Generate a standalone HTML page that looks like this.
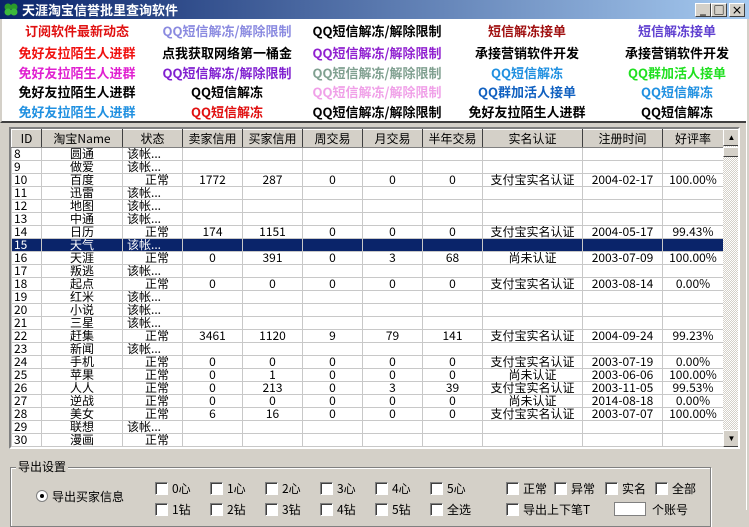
<!DOCTYPE html>
<html><head><meta charset="utf-8">
<style>
*{margin:0;padding:0;box-sizing:border-box}
body{width:749px;height:510px;overflow:hidden;background:#d4d0c8;font-family:"Liberation Sans","Noto Sans CJK SC",sans-serif;position:relative}
.title{position:absolute;left:0;top:0;width:749px;height:19px;background:linear-gradient(90deg,#0a246a,#a6caf0);color:#fff;font-weight:bold;font-size:13px;line-height:19px;padding-left:22px;font-family:"Noto Sans CJK SC",sans-serif}
.clover{position:absolute;left:3px;top:2px;width:16px;height:15px}
.btns{position:absolute;right:4px;top:3px;display:flex;gap:0}
.btns div{width:16px;height:14px;background:#d4d0c8;border:1px solid;border-color:#fff #404040 #404040 #fff;font-size:11px;line-height:12px;text-align:center;color:#000;font-weight:bold}
.links{position:absolute;left:0;top:19px;width:749px;height:104px;background:#fff;border-left:2px solid #d4d0c8;border-right:2px solid #d4d0c8;border-bottom:2px solid #404040}
.lk{position:absolute;width:150px;text-align:center;font-size:13px;font-weight:bold;font-family:"Noto Sans CJK SC",sans-serif;line-height:16px;white-space:nowrap}
.grid{position:absolute;left:9px;top:127px;width:731px;height:322px;border:2px solid;border-color:#808080 #fff #fff #808080;background:#fff;overflow:hidden}
table{border-collapse:collapse;table-layout:fixed;font-size:12px;font-family:"Noto Sans CJK SC",sans-serif}
th{height:18px;background:#d4d0c8;font-weight:normal;border:1px solid;border-color:#fff #404040 #808080 #fff;line-height:15px;font-size:12px;overflow:hidden;white-space:nowrap}
td{height:13px;line-height:12px;border:1px solid #c8c8c8;text-align:center;white-space:nowrap;overflow:hidden;padding:0}
td:first-child{text-align:left;padding-left:2px}
td.l{text-align:left;padding-left:4px}
td.s{text-align:right;padding-right:13px}
tr.sel td{background:#0a246a;color:#fff}
.sb{position:absolute;left:712px;top:0;width:17px;height:318px;background:repeating-conic-gradient(#d4d0c8 0 25%,#fff 0 50%) 0 0/2px 2px}
.arr{position:absolute;left:0;width:17px;height:17px;background:#d4d0c8;border:1px solid;border-color:#fff #404040 #404040 #fff;font-size:8px;text-align:center;line-height:15px}
.thumb{position:absolute;left:0;top:18px;width:17px;height:10px;background:#d4d0c8;border:1px solid;border-color:#fff #404040 #404040 #fff}
.grp{position:absolute;left:10px;top:467px;width:701px;height:60px;border:1px solid #808080;box-shadow:1px 1px 0 #fff inset,1px 1px 0 #fff}
.grpt{position:absolute;left:16px;top:458px;background:#d4d0c8;padding:0 2px;font-size:12px;font-family:"Noto Sans CJK SC",sans-serif}
.cb{position:absolute;font-size:12px;font-family:"Noto Sans CJK SC",sans-serif;line-height:13px;white-space:nowrap}
.cb i{display:inline-block;width:13px;height:13px;background:#fff;border:1px solid;border-color:#808080 #fff #fff #808080;box-shadow:1px 1px 0 #404040 inset;vertical-align:top;margin-right:4px}
</style></head><body>
<div class="title"><svg class="clover" viewBox="0 0 16 15"><circle cx="5" cy="5" r="3.5" fill="#2a9a2a"/><circle cx="11" cy="5" r="3.5" fill="#2a9a2a"/><circle cx="5" cy="10" r="3.5" fill="#3cb83c"/><circle cx="11" cy="10" r="3.5" fill="#3cb83c"/></svg>天涯淘宝信誉批里查询软件
<div class="btns"><div>_</div><div>□</div><div style="margin-left:2px">×</div></div></div>
<div class="links">
<div class="lk" style="left:0;top:4px;color:#e01010">订阅软件最新动态</div>
<div class="lk" style="left:150px;top:4px;color:#8a8ae0">QQ短信解冻/解除限制</div>
<div class="lk" style="left:300px;top:4px;color:#000">QQ短信解冻/解除限制</div>
<div class="lk" style="left:450px;top:4px;color:#a01010">短信解冻接单</div>
<div class="lk" style="left:600px;top:4px;color:#6040d0">短信解冻接单</div>
<div class="lk" style="left:0;top:26px;color:#f01010">免好友拉陌生人进群</div>
<div class="lk" style="left:150px;top:26px;color:#000">点我获取网络第一桶金</div>
<div class="lk" style="left:300px;top:26px;color:#9020d0">QQ短信解冻/解除限制</div>
<div class="lk" style="left:450px;top:26px;color:#000">承接营销软件开发</div>
<div class="lk" style="left:600px;top:26px;color:#000">承接营销软件开发</div>
<div class="lk" style="left:0;top:46px;color:#e020d0">免好友拉陌生人进群</div>
<div class="lk" style="left:150px;top:46px;color:#8020d0">QQ短信解冻/解除限制</div>
<div class="lk" style="left:300px;top:46px;color:#80a090">QQ短信解冻/解除限制</div>
<div class="lk" style="left:450px;top:46px;color:#2090e0">QQ短信解冻</div>
<div class="lk" style="left:600px;top:46px;color:#20e020">QQ群加活人接单</div>
<div class="lk" style="left:0;top:65px;color:#000">免好友拉陌生人进群</div>
<div class="lk" style="left:150px;top:65px;color:#000">QQ短信解冻</div>
<div class="lk" style="left:300px;top:65px;color:#f0a0e8">QQ短信解冻/解除限制</div>
<div class="lk" style="left:450px;top:65px;color:#1060c0">QQ群加活人接单</div>
<div class="lk" style="left:600px;top:65px;color:#2090e0">QQ短信解冻</div>
<div class="lk" style="left:0;top:85px;color:#2090e0">免好友拉陌生人进群</div>
<div class="lk" style="left:150px;top:85px;color:#e01010">QQ短信解冻</div>
<div class="lk" style="left:300px;top:85px;color:#000">QQ短信解冻/解除限制</div>
<div class="lk" style="left:450px;top:85px;color:#000">免好友拉陌生人进群</div>
<div class="lk" style="left:600px;top:85px;color:#000">QQ短信解冻</div>
</div>
<div class="grid">
<table>
<colgroup><col style="width:30px"><col style="width:81px"><col style="width:60px"><col style="width:60px"><col style="width:60px"><col style="width:60px"><col style="width:60px"><col style="width:60px"><col style="width:100px"><col style="width:80px"><col style="width:61px"></colgroup>
<tr><th>ID</th><th>淘宝Name</th><th>状态</th><th>卖家信用</th><th>买家信用</th><th>周交易</th><th>月交易</th><th>半年交易</th><th>实名认证</th><th>注册时间</th><th>好评率</th></tr>
<tr><td>8</td><td>圆通</td><td class="l">该帐...</td><td></td><td></td><td></td><td></td><td></td><td></td><td></td><td></td></tr>
<tr><td>9</td><td>做爱</td><td class="l">该帐...</td><td></td><td></td><td></td><td></td><td></td><td></td><td></td><td></td></tr>
<tr><td>10</td><td>百度</td><td class="s">正常</td><td>1772</td><td>287</td><td>0</td><td>0</td><td>0</td><td>支付宝实名认证</td><td>2004-02-17</td><td>100.00%</td></tr>
<tr><td>11</td><td>迅雷</td><td class="l">该帐...</td><td></td><td></td><td></td><td></td><td></td><td></td><td></td><td></td></tr>
<tr><td>12</td><td>地图</td><td class="l">该帐...</td><td></td><td></td><td></td><td></td><td></td><td></td><td></td><td></td></tr>
<tr><td>13</td><td>中通</td><td class="l">该帐...</td><td></td><td></td><td></td><td></td><td></td><td></td><td></td><td></td></tr>
<tr><td>14</td><td>日历</td><td class="s">正常</td><td>174</td><td>1151</td><td>0</td><td>0</td><td>0</td><td>支付宝实名认证</td><td>2004-05-17</td><td>99.43%</td></tr>
<tr class="sel"><td>15</td><td>天气</td><td class="l">该帐...</td><td></td><td></td><td></td><td></td><td></td><td></td><td></td><td></td></tr>
<tr><td>16</td><td>天涯</td><td class="s">正常</td><td>0</td><td>391</td><td>0</td><td>3</td><td>68</td><td>尚未认证</td><td>2003-07-09</td><td>100.00%</td></tr>
<tr><td>17</td><td>叛逃</td><td class="l">该帐...</td><td></td><td></td><td></td><td></td><td></td><td></td><td></td><td></td></tr>
<tr><td>18</td><td>起点</td><td class="s">正常</td><td>0</td><td>0</td><td>0</td><td>0</td><td>0</td><td>支付宝实名认证</td><td>2003-08-14</td><td>0.00%</td></tr>
<tr><td>19</td><td>红米</td><td class="l">该帐...</td><td></td><td></td><td></td><td></td><td></td><td></td><td></td><td></td></tr>
<tr><td>20</td><td>小说</td><td class="l">该帐...</td><td></td><td></td><td></td><td></td><td></td><td></td><td></td><td></td></tr>
<tr><td>21</td><td>三星</td><td class="l">该帐...</td><td></td><td></td><td></td><td></td><td></td><td></td><td></td><td></td></tr>
<tr><td>22</td><td>赶集</td><td class="s">正常</td><td>3461</td><td>1120</td><td>9</td><td>79</td><td>141</td><td>支付宝实名认证</td><td>2004-09-24</td><td>99.23%</td></tr>
<tr><td>23</td><td>新闻</td><td class="l">该帐...</td><td></td><td></td><td></td><td></td><td></td><td></td><td></td><td></td></tr>
<tr><td>24</td><td>手机</td><td class="s">正常</td><td>0</td><td>0</td><td>0</td><td>0</td><td>0</td><td>支付宝实名认证</td><td>2003-07-19</td><td>0.00%</td></tr>
<tr><td>25</td><td>苹果</td><td class="s">正常</td><td>0</td><td>1</td><td>0</td><td>0</td><td>0</td><td>尚未认证</td><td>2003-06-06</td><td>100.00%</td></tr>
<tr><td>26</td><td>人人</td><td class="s">正常</td><td>0</td><td>213</td><td>0</td><td>3</td><td>39</td><td>支付宝实名认证</td><td>2003-11-05</td><td>99.53%</td></tr>
<tr><td>27</td><td>逆战</td><td class="s">正常</td><td>0</td><td>0</td><td>0</td><td>0</td><td>0</td><td>尚未认证</td><td>2014-08-18</td><td>0.00%</td></tr>
<tr><td>28</td><td>美女</td><td class="s">正常</td><td>6</td><td>16</td><td>0</td><td>0</td><td>0</td><td>支付宝实名认证</td><td>2003-07-07</td><td>100.00%</td></tr>
<tr><td>29</td><td>联想</td><td class="l">该帐...</td><td></td><td></td><td></td><td></td><td></td><td></td><td></td><td></td></tr>
<tr><td>30</td><td>漫画</td><td class="s">正常</td><td></td><td></td><td></td><td></td><td></td><td></td><td></td><td></td></tr>
</table>
<div class="sb"><div class="arr" style="top:0">▲</div><div class="thumb"></div><div class="arr" style="top:301px">▼</div></div>
</div>
<div class="grp"></div>
<div class="grpt">导出设置</div>
<div class="cb" style="left:36px;top:490px"><span style="display:inline-block;width:12px;height:12px;border-radius:50%;background:#fff;border:1px solid #808080;vertical-align:top;margin-right:4px;position:relative"><span style="position:absolute;left:3px;top:3px;width:4px;height:4px;border-radius:50%;background:#000"></span></span>导出买家信息</div>
<div class="cb" style="left:155px;top:482px"><i></i>0心</div>
<div class="cb" style="left:210px;top:482px"><i></i>1心</div>
<div class="cb" style="left:265px;top:482px"><i></i>2心</div>
<div class="cb" style="left:320px;top:482px"><i></i>3心</div>
<div class="cb" style="left:375px;top:482px"><i></i>4心</div>
<div class="cb" style="left:430px;top:482px"><i></i>5心</div>
<div class="cb" style="left:506px;top:482px"><i></i>正常</div>
<div class="cb" style="left:554px;top:482px"><i></i>异常</div>
<div class="cb" style="left:605px;top:482px"><i></i>实名</div>
<div class="cb" style="left:655px;top:482px"><i></i>全部</div>
<div class="cb" style="left:155px;top:503px"><i></i>1钻</div>
<div class="cb" style="left:210px;top:503px"><i></i>2钻</div>
<div class="cb" style="left:265px;top:503px"><i></i>3钻</div>
<div class="cb" style="left:320px;top:503px"><i></i>4钻</div>
<div class="cb" style="left:375px;top:503px"><i></i>5钻</div>
<div class="cb" style="left:430px;top:503px"><i></i>全选</div>
<div class="cb" style="left:506px;top:503px"><i></i>导出上下笔T</div>
<div style="position:absolute;left:614px;top:502px;width:32px;height:14px;background:#fff;border:1px solid #808080"></div>
<div class="cb" style="left:652px;top:503px">个账号</div>
<div style="position:absolute;left:746px;top:19px;width:3px;height:491px;background:#d4d0c8;border-left:1px solid #fff"></div>
</body></html>
